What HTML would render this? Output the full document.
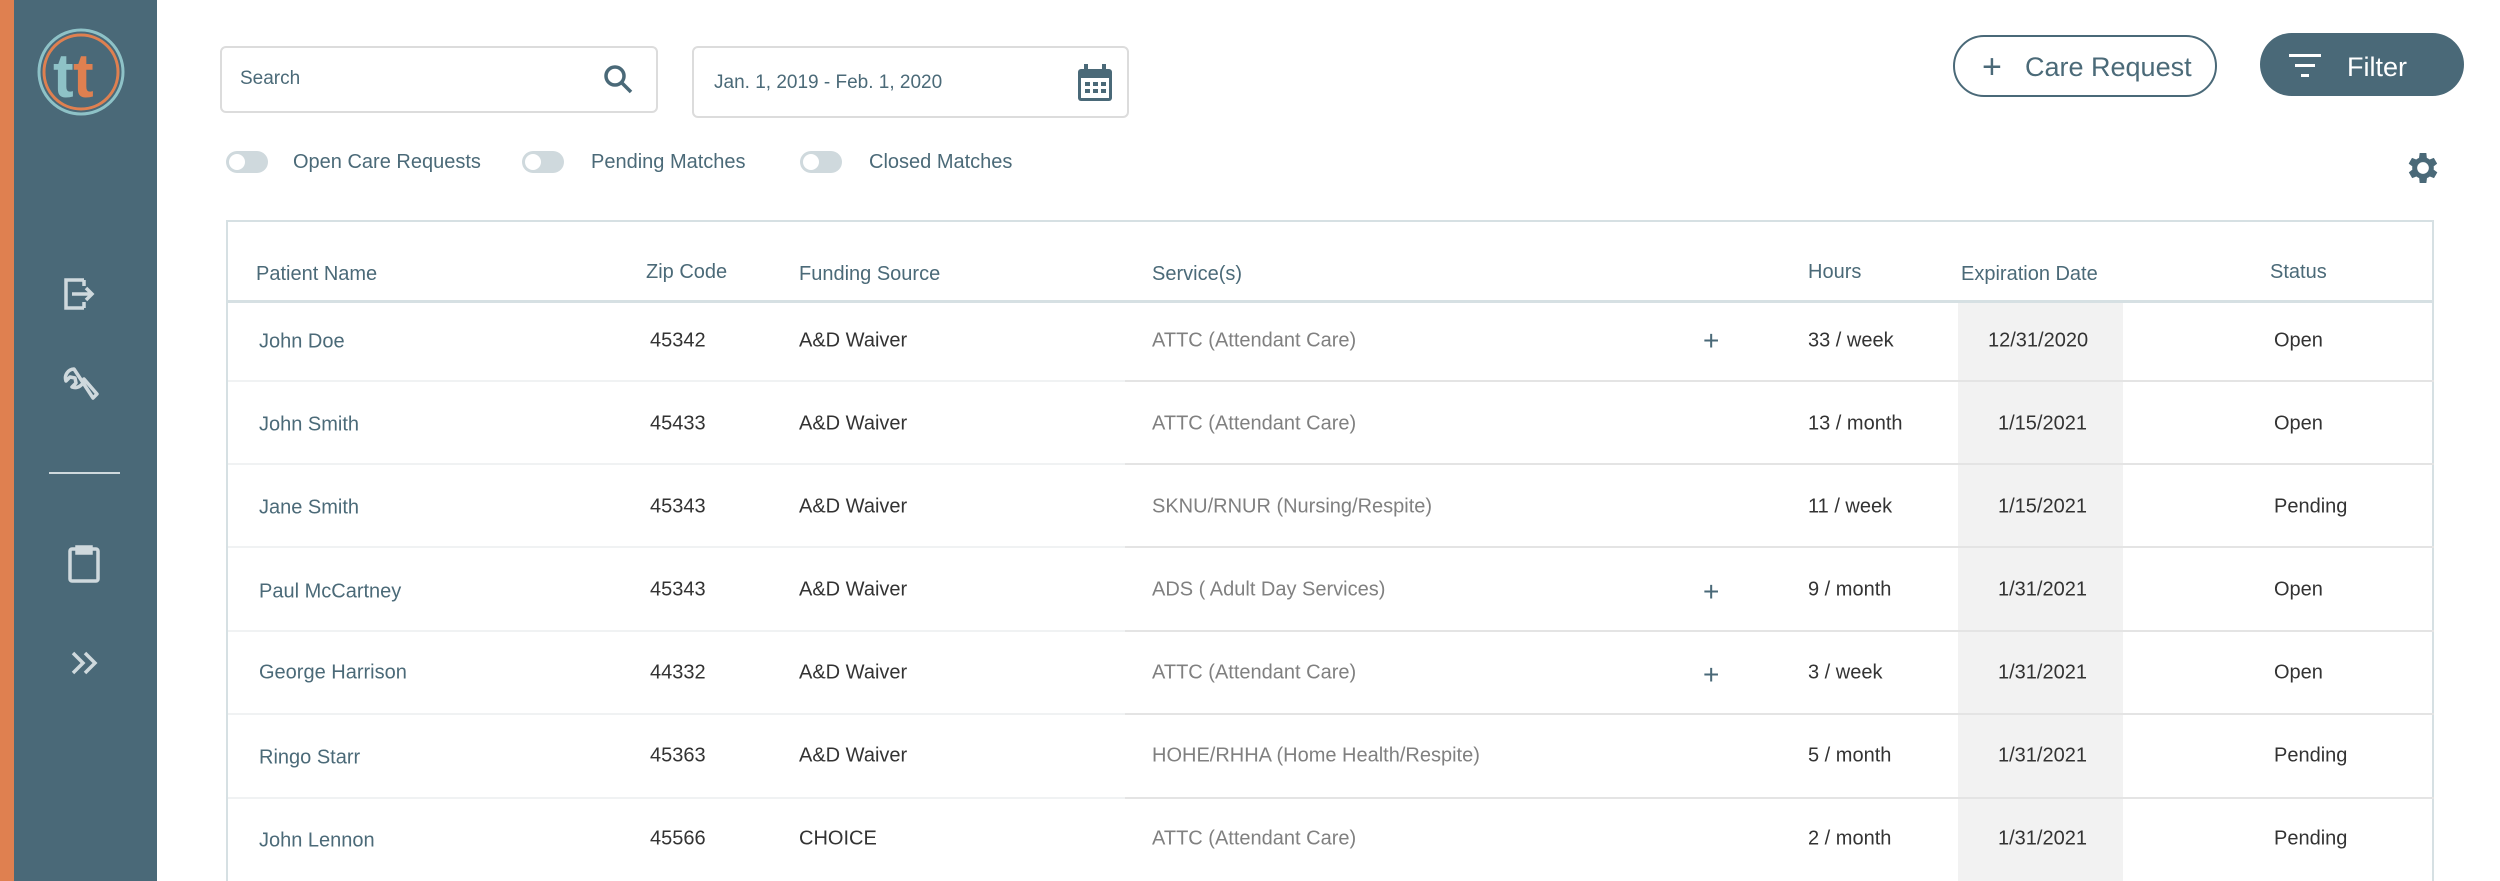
<!DOCTYPE html>
<html><head><meta charset="utf-8"><style>
*{margin:0;padding:0;box-sizing:border-box}
html{width:2500px;height:881px;overflow:hidden}
body{width:2500px;height:881px;overflow:hidden;background:#fff;font-family:"Liberation Sans",sans-serif;position:relative}
.a{position:absolute}
.sb{left:0;top:0;width:157px;height:881px;background:#4a6978}
.or{left:0;top:0;width:14px;height:881px;background:#df8050}
.box{border:2px solid #dcdcdc;border-radius:6px;background:#fff}
.t{color:#4b6a78;font-size:20px;white-space:nowrap}
.tg{width:42px;height:22px;border-radius:11px;background:#cfd9dd}
.tg:after{content:"";position:absolute;left:3px;top:3px;width:16px;height:16px;border-radius:50%;background:#fff}
.hd{color:#4b6a78;font-size:20px;top:263px;white-space:nowrap}
.cell{font-size:20px;white-space:nowrap;color:#333;transform:translateY(-50%)}
.nm{color:#4b6a78}
.sv{color:#808080}
.ln{height:2px;background:#f0f2f3;left:228px;width:2206px}
.ln2{height:2px;background:#e4e4e4;left:1125px;width:1309px}
</style></head><body>
<div class="a sb"></div><div class="a or"></div>
<svg class="a" style="left:36px;top:27px" width="90" height="90" viewBox="0 0 90 90">
<circle cx="45" cy="45" r="42" fill="none" stroke="#8ec2c7" stroke-width="3"/>
<circle cx="45" cy="45" r="37" fill="none" stroke="#df8050" stroke-width="3"/>
<text x="17" y="70" font-family="Liberation Sans" font-weight="bold" font-size="62" fill="#8ec2c7">t</text>
<text x="37" y="70" font-family="Liberation Sans" font-weight="bold" font-size="62" fill="#df8050">t</text>
</svg>
<svg class="a" style="left:62px;top:276px" width="36" height="36" viewBox="0 0 36 36" fill="none" stroke="#cfd9dd" stroke-width="3.5">
<path d="M22 4H4v28h18M4 4v28M22 32v-6M22 4v6M10 18h20M24 12l6 6-6 6"/></svg>
<svg class="a" style="left:62px;top:366px" width="40" height="40" viewBox="0 0 40 40" fill="none" stroke="#cfd9dd" stroke-width="3.5" stroke-linejoin="round">
<path d="M12 3a9 9 0 0 0-8 12l4-4 5 1 1 5-4 4a9 9 0 0 0 12-8l13 15-4 4z"/></svg>
<div class="a" style="left:49px;top:472px;width:71px;height:2px;background:#cfd9dd"></div>
<svg class="a" style="left:68px;top:543px" width="34" height="40" viewBox="0 0 34 40" fill="none" stroke="#cfd9dd" stroke-width="3.5">
<rect x="2" y="6" width="28" height="32" rx="2"/><path d="M9 4h14v6H9z" fill="#cfd9dd"/></svg>
<svg class="a" style="left:70px;top:650px" width="30" height="26" viewBox="0 0 30 26" fill="none" stroke="#cfd9dd" stroke-width="3.5">
<path d="M3 3l10 10-10 10M15 3l10 10-10 10"/></svg>

<div class="a box" style="left:220px;top:46px;width:438px;height:67px"></div>
<div class="a t" style="left:240px;top:68px;font-size:19px">Search</div>
<svg class="a" style="left:602px;top:63px" width="32" height="32" viewBox="0 0 32 32" fill="none" stroke="#4a6978" stroke-width="3.5">
<circle cx="13" cy="13" r="9"/><path d="M20 20l9 9"/></svg>
<div class="a box" style="left:692px;top:46px;width:437px;height:72px"></div>
<div class="a t" style="left:714px;top:72px;font-size:19px">Jan. 1, 2019 - Feb. 1, 2020</div>
<svg class="a" style="left:1077px;top:64px" width="36" height="38" viewBox="0 0 36 38">
<rect x="1" y="5" width="34" height="32" rx="3" fill="#4a6978"/><rect x="7" y="0" width="4" height="9" fill="#4a6978"/><rect x="25" y="0" width="4" height="9" fill="#4a6978"/>
<rect x="4" y="14" width="28" height="20" fill="#fff"/>
<g fill="#4a6978"><rect x="8" y="18" width="5" height="4"/><rect x="16" y="18" width="5" height="4"/><rect x="24" y="18" width="5" height="4"/><rect x="8" y="25" width="5" height="4"/><rect x="16" y="25" width="5" height="4"/><rect x="24" y="25" width="5" height="4"/></g></svg>

<div class="a tg" style="left:226px;top:151px"></div><div class="a t" style="left:293px;top:151px">Open Care Requests</div>
<div class="a tg" style="left:522px;top:151px"></div><div class="a t" style="left:591px;top:151px">Pending Matches</div>
<div class="a tg" style="left:800px;top:151px"></div><div class="a t" style="left:869px;top:151px">Closed Matches</div>

<div class="a" style="left:1953px;top:35px;width:264px;height:62px;border:2px solid #4a6978;border-radius:31px"></div>
<div class="a" style="left:1982px;top:54px;color:#4a6978;font-size:34px;line-height:26px">+</div>
<div class="a t" style="left:2025px;top:52px;font-size:27px">Care Request</div>
<div class="a" style="left:2260px;top:33px;width:204px;height:63px;background:#4a6978;border-radius:32px"></div>
<svg class="a" style="left:2289px;top:54px" width="32" height="24" viewBox="0 0 32 24"><g fill="#fff"><rect x="0" y="0" width="32" height="3"/><rect x="6" y="10" width="20" height="3"/><rect x="12" y="20" width="8" height="3"/></g></svg>
<div class="a" style="left:2347px;top:52px;color:#fff;font-size:27px">Filter</div>
<svg class="a" style="left:2403px;top:148px" width="40" height="40" viewBox="0 0 24 24"><path fill="#4a6978" d="M19.4 13a7.5 7.5 0 0 0 0-2l2.1-1.6-2-3.5-2.5 1a7.5 7.5 0 0 0-1.7-1L15 3h-4l-.4 2.9a7.5 7.5 0 0 0-1.7 1l-2.5-1-2 3.5L6.6 11a7.5 7.5 0 0 0 0 2l-2.1 1.6 2 3.5 2.5-1a7.5 7.5 0 0 0 1.7 1L11 21h4l.4-2.9a7.5 7.5 0 0 0 1.7-1l2.5 1 2-3.5zM13 15.5a3.5 3.5 0 1 1 0-7 3.5 3.5 0 0 1 0 7z" transform="translate(-1 0)"/></svg>

<div class="a" style="left:226px;top:220px;width:2208px;height:661px;border:2px solid #d6e0e3;border-bottom:none"></div>
<div class="a" style="left:226px;top:300px;width:2208px;height:3px;background:#d6e0e3"></div>
<div class="a" style="left:1958px;top:303px;width:165px;height:578px;background:#f2f2f2"></div>
<div class="a hd" style="left:256px">Patient Name</div>
<div class="a hd" style="left:646px;top:261px">Zip Code</div>
<div class="a hd" style="left:799px">Funding Source</div>
<div class="a hd" style="left:1152px">Service(s)</div>
<div class="a hd" style="left:1808px;top:261px">Hours</div>
<div class="a hd" style="left:1961px">Expiration Date</div>
<div class="a hd" style="left:2270px;top:261px">Status</div>

<div class="a ln" style="top:380px"></div><div class="a ln2" style="top:380px"></div>
<div class="a ln" style="top:463px"></div><div class="a ln2" style="top:463px"></div>
<div class="a ln" style="top:546px"></div><div class="a ln2" style="top:546px"></div>
<div class="a ln" style="top:630px"></div><div class="a ln2" style="top:630px"></div>
<div class="a ln" style="top:713px"></div><div class="a ln2" style="top:713px"></div>
<div class="a ln" style="top:797px"></div><div class="a ln2" style="top:797px"></div>

<div class="a cell nm" style="left:259px;top:342px">John Doe</div><div class="a cell" style="left:650px;top:341px">45342</div><div class="a cell" style="left:799px;top:341px">A&amp;D Waiver</div><div class="a cell sv" style="left:1152px;top:341px">ATTC (Attendant Care)</div><div class="a cell sv" style="left:1703px;top:341px;color:#4a6978;font-size:28px">+</div><div class="a cell" style="left:1808px;top:341px">33 / week</div><div class="a cell" style="left:1988px;top:341px">12/31/2020</div><div class="a cell" style="left:2274px;top:341px">Open</div>

<div class="a cell nm" style="left:259px;top:425px">John Smith</div><div class="a cell" style="left:650px;top:424px">45433</div><div class="a cell" style="left:799px;top:424px">A&amp;D Waiver</div><div class="a cell sv" style="left:1152px;top:424px">ATTC (Attendant Care)</div><div class="a cell" style="left:1808px;top:424px">13 / month</div><div class="a cell" style="left:1998px;top:424px">1/15/2021</div><div class="a cell" style="left:2274px;top:424px">Open</div>

<div class="a cell nm" style="left:259px;top:508px">Jane Smith</div><div class="a cell" style="left:650px;top:507px">45343</div><div class="a cell" style="left:799px;top:507px">A&amp;D Waiver</div><div class="a cell sv" style="left:1152px;top:507px">SKNU/RNUR (Nursing/Respite)</div><div class="a cell" style="left:1808px;top:507px">11 / week</div><div class="a cell" style="left:1998px;top:507px">1/15/2021</div><div class="a cell" style="left:2274px;top:507px">Pending</div>

<div class="a cell nm" style="left:259px;top:592px">Paul McCartney</div><div class="a cell" style="left:650px;top:590px">45343</div><div class="a cell" style="left:799px;top:590px">A&amp;D Waiver</div><div class="a cell sv" style="left:1152px;top:590px">ADS ( Adult Day Services)</div><div class="a cell sv" style="left:1703px;top:592px;color:#4a6978;font-size:28px">+</div><div class="a cell" style="left:1808px;top:590px">9 / month</div><div class="a cell" style="left:1998px;top:590px">1/31/2021</div><div class="a cell" style="left:2274px;top:590px">Open</div>

<div class="a cell nm" style="left:259px;top:673px">George Harrison</div><div class="a cell" style="left:650px;top:673px">44332</div><div class="a cell" style="left:799px;top:673px">A&amp;D Waiver</div><div class="a cell sv" style="left:1152px;top:673px">ATTC (Attendant Care)</div><div class="a cell sv" style="left:1703px;top:675px;color:#4a6978;font-size:28px">+</div><div class="a cell" style="left:1808px;top:673px">3 / week</div><div class="a cell" style="left:1998px;top:673px">1/31/2021</div><div class="a cell" style="left:2274px;top:673px">Open</div>

<div class="a cell nm" style="left:259px;top:758px">Ringo Starr</div><div class="a cell" style="left:650px;top:756px">45363</div><div class="a cell" style="left:799px;top:756px">A&amp;D Waiver</div><div class="a cell sv" style="left:1152px;top:756px">HOHE/RHHA (Home Health/Respite)</div><div class="a cell" style="left:1808px;top:756px">5 / month</div><div class="a cell" style="left:1998px;top:756px">1/31/2021</div><div class="a cell" style="left:2274px;top:756px">Pending</div>

<div class="a cell nm" style="left:259px;top:841px">John Lennon</div><div class="a cell" style="left:650px;top:839px">45566</div><div class="a cell" style="left:799px;top:839px">CHOICE</div><div class="a cell sv" style="left:1152px;top:839px">ATTC (Attendant Care)</div><div class="a cell" style="left:1808px;top:839px">2 / month</div><div class="a cell" style="left:1998px;top:839px">1/31/2021</div><div class="a cell" style="left:2274px;top:839px">Pending</div>
</body></html>
